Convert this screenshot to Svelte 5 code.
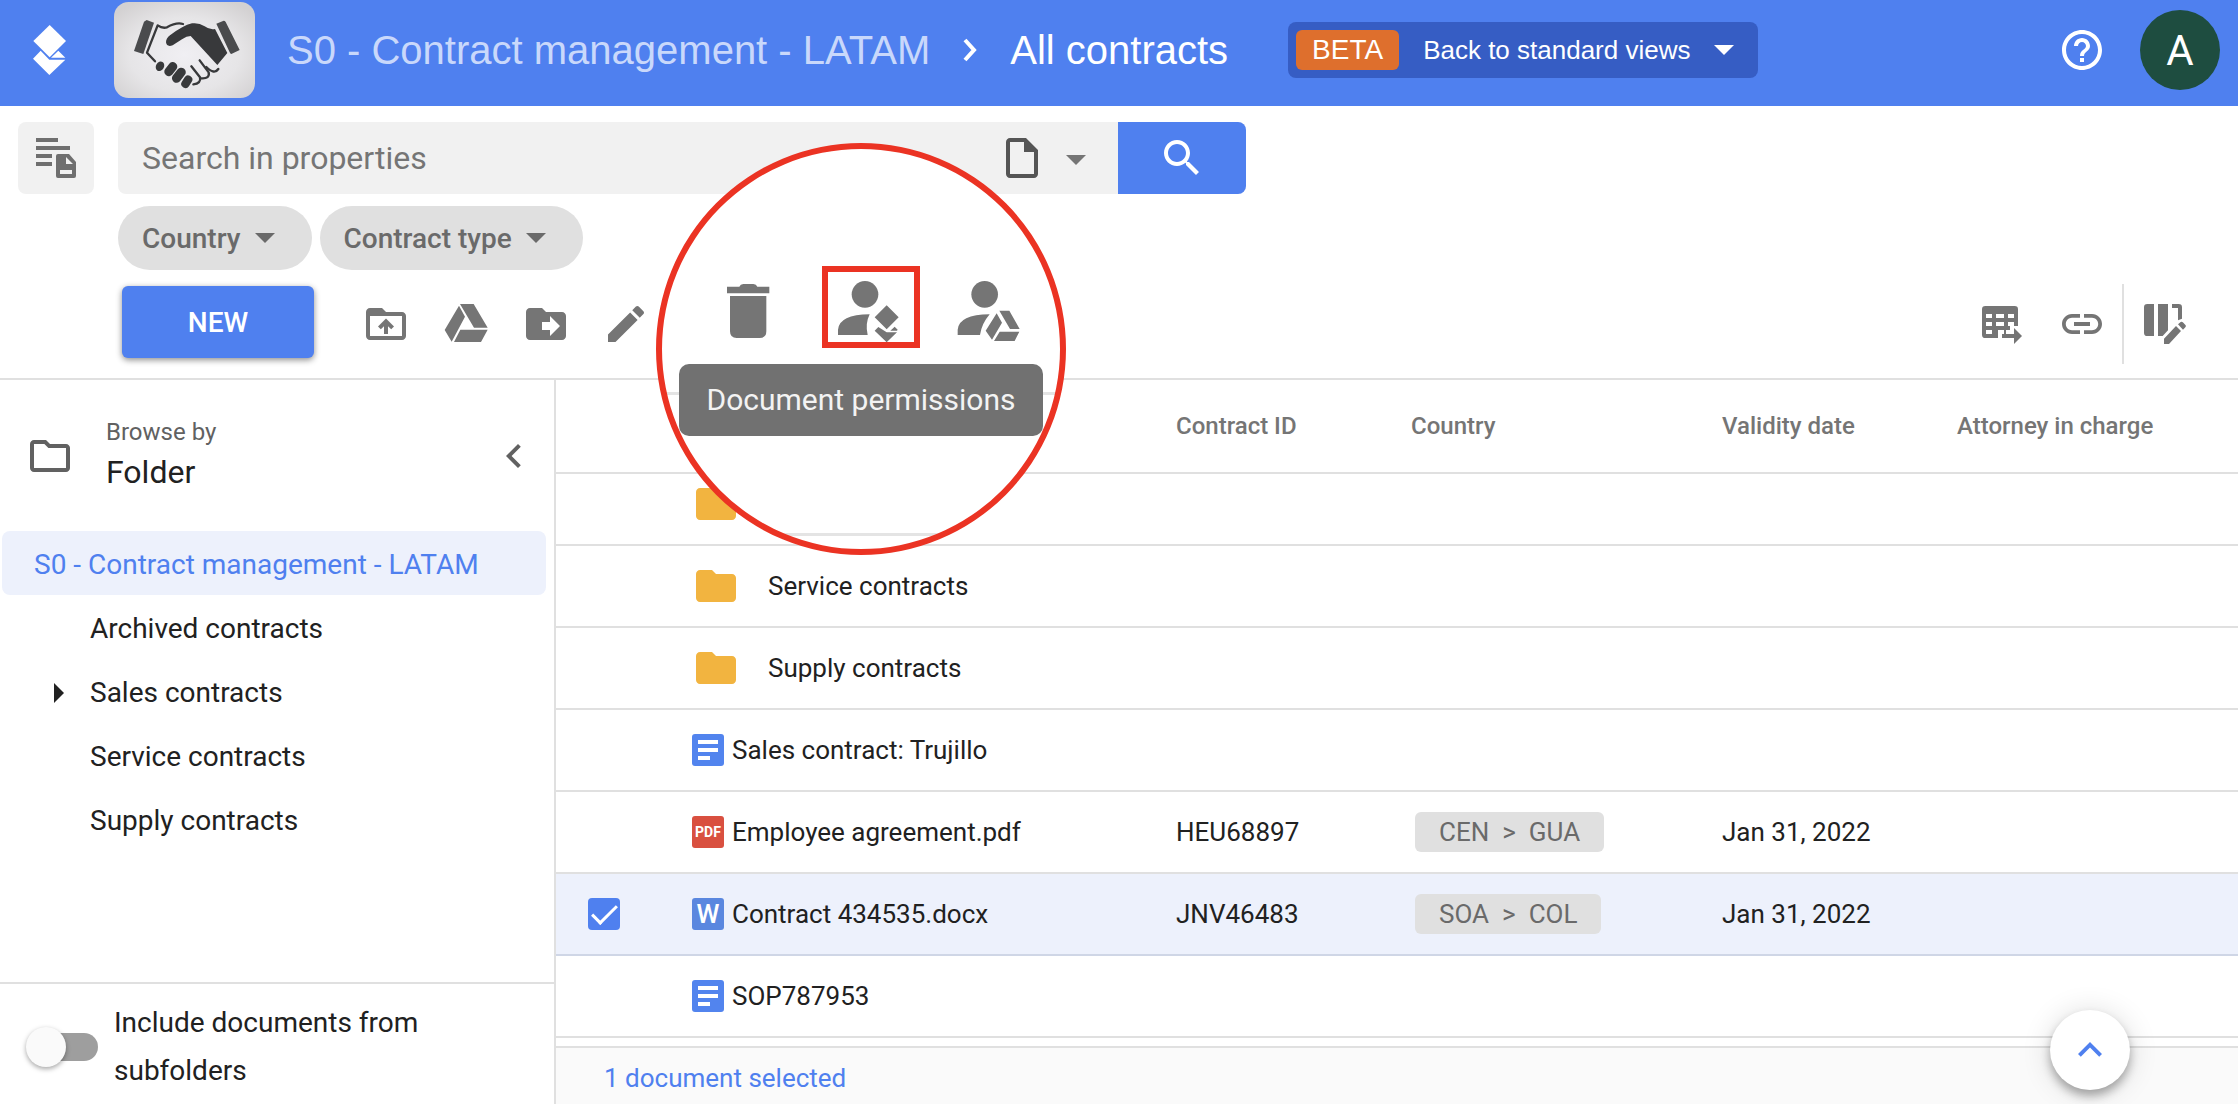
<script>
  const folderPath =
    'M10 4H4c-1.1 0-2 .9-2 2v12c0 1.1.9 2 2 2h16c1.1 0 2-.9 2-2V8c0-1.1-.9-2-2-2h-8l-2-2z';

  const folders = [
    { name: 'Archived contracts', expandable: false },
    { name: 'Sales contracts', expandable: true },
    { name: 'Service contracts', expandable: false },
    { name: 'Supply contracts', expandable: false }
  ];

  const filters = ['Country', 'Contract type'];

  let rows = $state([
    { kind: 'folder', name: '' },
    { kind: 'folder', name: 'Service contracts' },
    { kind: 'folder', name: 'Supply contracts' },
    { kind: 'doc', name: 'Sales contract: Trujillo' },
    { kind: 'pdf', name: 'Employee agreement.pdf', id: 'HEU68897', country: ['CEN', 'GUA'], date: 'Jan 31, 2022' },
    { kind: 'word', name: 'Contract 434535.docx', id: 'JNV46483', country: ['SOA', 'COL'], date: 'Jan 31, 2022', selected: true },
    { kind: 'doc', name: 'SOP787953' }
  ]);

  let includeSub = $state(false);
</script>

<div class="app">
  <header class="topbar">
    <svg class="logo" viewBox="99 75 99 150" aria-hidden="true">
      <path d="M149 75l49 48-49 49-49-49z" />
      <path d="M122 152l26 27h48l-48 46-49-49z" />
      <path d="M153 173l22-21 21 21z" />
    </svg>
    <svg class="brand" viewBox="342 6 423 288" role="img" aria-label="Handshake">
      <defs>
        <radialGradient id="paper" cx="50%" cy="55%" r="65%">
          <stop offset="0" stop-color="#f0eff3" />
          <stop offset="0.6" stop-color="#e6e5e7" />
          <stop offset="1" stop-color="#d3d1d2" />
        </radialGradient>
      </defs>
      <rect x="342" y="6" width="423" height="288" rx="44" fill="url(#paper)" />
      <g fill="#38393b">
        <path d="M440 60l22 8-32 94-28-9 30-88z" fill="#4a4b4d" />
        <path d="M649 71l22-9q4 0 6 4l42 84-25 12q-3 0-5-5z" fill="#4a4b4d" />
        <path d="M498 127q0-12 12-21 38-29 66-36 20-3 38 9 14 11 31 8l37 72-30 36-80-87q-12 0-26 10l-28 18q-18 6-20-9z" />
        <ellipse cx="480" cy="199" rx="12" ry="15" transform="rotate(30 480 199)" />
        <rect x="499" y="184" width="27" height="46" rx="13" transform="rotate(38 512 207)" />
        <rect x="523" y="201" width="27" height="50" rx="13" transform="rotate(38 537 226)" />
        <rect x="548" y="225" width="25" height="40" rx="12" transform="rotate(32 560 245)" />
      </g>
      <g fill="none" stroke="#38393b" stroke-width="7" stroke-linecap="round" stroke-linejoin="round">
        <path d="M465 184l-24-26 32-82q14 10 28 6 28-16 48-10" />
        <path d="M574 199l26 33q4 18-20 21" />
        <path d="M599 181l27 36q4 20-22 18" />
        <path d="M619 201q24 24 36 6" />
      </g>
    </svg>
    <nav class="crumbs" aria-label="Breadcrumb">
      <a class="parent" href="#root">S0 - Contract management - LATAM</a>
      <svg class="sep" viewBox="0 0 14 24" aria-hidden="true"><path d="M2 2l9 10-9 10" /></svg>
      <span>All contracts</span>
    </nav>
    <button class="beta" type="button">
      <span class="tag">BETA</span>
      <span>Back to standard views</span>
      <i class="caret"></i>
    </button>
    <button class="help" type="button" aria-label="Help">
      <svg class="ic" viewBox="0 0 24 24"><path d="M11 18h2v-2h-2v2zm1-16C6.48 2 2 6.48 2 12s4.48 10 10 10 10-4.48 10-10S17.52 2 12 2zm0 18c-4.41 0-8-3.59-8-8s3.59-8 8-8 8 3.59 8 8-3.59 8-8 8zm0-14c-2.21 0-4 1.79-4 4h2c0-1.1.9-2 2-2s2 .9 2 2c0 2-3 1.75-3 5h2c0-2.25 3-2.5 3-5 0-2.21-1.79-4-4-4z" /></svg>
    </button>
    <button class="avatar" type="button">A</button>
  </header>

  <section class="finder">
    <button class="mode" type="button" aria-label="Search mode">
      <svg class="ic" viewBox="32 134 48 48">
        <path d="M36 138h22v4H36zM36 146h34v4H36zM36 154h16v4H36zM36 162h16v4H36z" />
        <path fill-rule="evenodd" d="M58 154h11l7 8v14q0 2-2 2H58q-2 0-2-2v-20q0-2 2-2zm8 3v7h7zM60 170v4h12v-4z" />
      </svg>
    </button>
    <div class="stack">
      <form class="search" onsubmit={(e) => e.preventDefault()}>
        <input type="text" placeholder="Search in properties" aria-label="Search in properties" />
        <button class="scope" type="button" aria-label="Search scope">
          <svg class="ic" viewBox="0 0 24 24"><path d="M14 2H6c-1.1 0-2 .9-2 2v16c0 1.1.9 2 2 2h12c1.1 0 2-.9 2-2V8l-6-6zM6 20V4h7v5h5v11H6z" /></svg>
          <i class="caret"></i>
        </button>
        <button class="go" type="submit" aria-label="Search">
          <svg class="ic" viewBox="0 0 24 24"><path d="M15.5 14h-.79l-.28-.27C15.41 12.59 16 11.11 16 9.5 16 5.91 13.09 3 9.5 3S3 5.91 3 9.5 5.91 16 9.5 16c1.61 0 3.09-.59 4.23-1.57l.27.28v.79l5 4.99L20.49 19l-4.99-5zm-6 0C7.01 14 5 11.99 5 9.5S7.01 5 9.5 5 14 7.01 14 9.5 11.99 14 9.5 14z" /></svg>
        </button>
      </form>
      <div class="filters">
        {#each filters as f}
          <button type="button">{f}<i class="caret"></i></button>
        {/each}
      </div>
    </div>
  </section>

  <section class="toolbar">
    <button class="new" type="button">NEW</button>
    <button class="tool" type="button" aria-label="Upload">
      <svg class="ic" viewBox="0 0 24 24"><path fill-rule="evenodd" d="M10 4H4c-1.1 0-2 .9-2 2v12c0 1.1.9 2 2 2h16c1.1 0 2-.9 2-2V8c0-1.1-.9-2-2-2h-8l-2-2zM4 8h16v10H4z" /><path d="M12 9.2l-4 4 1.4 1.4 1.6-1.5V17h2v-3.9l1.6 1.5 1.4-1.4z" /></svg>
    </button>
    <button class="tool" type="button" aria-label="Open in Drive">
      <svg class="ic" viewBox="306 60 144 144"><path d="M360 72h41l42 71h-41zM357 77l18 33-40 75-21-35zM361 149h82l-20 37h-81z" /></svg>
    </button>
    <button class="tool" type="button" aria-label="Move">
      <svg class="ic" viewBox="0 0 24 24"><path fill-rule="evenodd" d="{folderPath}M14 18v-3h-4v-4h4V8l5 5z" /></svg>
    </button>
    <button class="tool" type="button" aria-label="Edit">
      <svg class="ic" viewBox="0 0 24 24"><path d="M3 17.25V21h3.75L17.81 9.94l-3.75-3.75L3 17.25zM20.71 7.04c.39-.39.39-1.02 0-1.41l-2.34-2.34c-.39-.39-1.02-.39-1.41 0l-1.83 1.83 3.75 3.75 1.83-1.83z" /></svg>
    </button>
    <span class="grow"></span>
    <button class="tool" type="button" aria-label="Export table">
      <svg class="ic" viewBox="54 90 144 144">
        <path fill-rule="evenodd" d="M76 108h88q10 0 10 10v50h-24v12h-36v24H76q-10 0-10-10v-76q0-10 10-10zM78 132v12h18v-12zM108 132v12h24v-12zM144 132v12h18v-12zM78 156v12h18v-12zM108 156v12h24v-12zM144 156v12h18v-12zM78 180v12h18v-12z" />
        <path d="M96 180h12v24H96zM108 192h6v12h-6zM126 192h36v-18l24 24-24 24v-18h-36zM132 180h6v12h-6z" />
      </svg>
    </button>
    <button class="tool" type="button" aria-label="Copy link">
      <svg class="ic" viewBox="0 0 24 24"><path d="M3.9 12c0-1.71 1.39-3.1 3.1-3.1h4V7H7c-2.76 0-5 2.24-5 5s2.24 5 5 5h4v-1.9H7c-1.71 0-3.1-1.39-3.1-3.1zM8 13h8v-2H8v2zm9-6h-4v1.9h4c1.71 0 3.1 1.39 3.1 3.1s-1.39 3.1-3.1 3.1h-4V17h4c2.76 0 5-2.24 5-5s-2.24-5-5-5z" /></svg>
    </button>
    <span class="rule"></span>
    <button class="tool" type="button" aria-label="Edit columns">
      <svg class="ic" viewBox="540 90 144 144"><path d="M562 102h20v96h-20q-10 0-10-10v-76q0-10 10-10zM594 102h30v79l-16 17h-14zM636 102h20q10 0 10 10v34l-12 5v-37h-18zM612 222v-16l36-38 15 15-36 39zM654 163l8-7q4-2 8 2l7 8q2 3-1 6l-7 7z" /></svg>
    </button>
  </section>

  <main>
    <aside>
      <div class="browse">
        <svg class="ic" viewBox="0 0 24 24" aria-hidden="true"><path fill-rule="evenodd" d="{folderPath}M9.2 6l2 2H20v10H4V6z" /></svg>
        <div class="label">
          <span class="small">Browse by</span>
          <span class="big">Folder</span>
        </div>
        <button class="fold" type="button" aria-label="Collapse panel">
          <svg class="ic" viewBox="0 0 24 24"><path d="M15.4 7.4L14 6l-6 6 6 6 1.4-1.4-4.6-4.6z" /></svg>
        </button>
      </div>
      <nav class="tree" aria-label="Folders">
        <a class="root" href="#root">S0 - Contract management - LATAM</a>
        {#each folders as f}
          <a href="#folder" class:open={f.expandable}>{f.name}</a>
        {/each}
      </nav>
      <label class="include">
        <input type="checkbox" role="switch" bind:checked={includeSub} />
        <span>Include documents from subfolders</span>
      </label>
    </aside>

    <section class="list">
      <table>
        <colgroup>
          <col class="c-pick" /><col class="c-name" /><col class="c-id" /><col class="c-country" /><col class="c-date" /><col />
        </colgroup>
        <thead>
          <tr>
            <th></th><th></th><th>Contract ID</th><th>Country</th><th>Validity date</th><th>Attorney in charge</th>
          </tr>
        </thead>
        <tbody>
          {#each rows as r, i}
            <tr class:selected={r.selected} class:cut={i === 0}>
              <td class="pick">
                {#if r.selected}<input type="checkbox" checked aria-label="Select {r.name}" />{/if}
              </td>
              <td>
                <div class="name" class:dir={r.kind === 'folder'}>
                  {#if r.kind === 'folder'}
                    <svg class="folder" viewBox="2 4 20 16" aria-hidden="true"><path d={folderPath} /></svg>
                  {:else if r.kind === 'doc'}
                    <span class="file doc"><svg viewBox="0 0 32 32" aria-hidden="true"><path d="M6 6h20v4H6zM6 14h20v4H6zM6 22h12v4H6z" /></svg></span>
                  {:else if r.kind === 'pdf'}
                    <span class="file pdf">PDF</span>
                  {:else}
                    <span class="file word">W</span>
                  {/if}
                  <span>{r.name}</span>
                </div>
              </td>
              <td>{r.id ?? ''}</td>
              <td>
                {#if r.country}
                  <span class="pill"><span>{r.country[0]}</span><span>&gt;</span><span>{r.country[1]}</span></span>
                {/if}
              </td>
              <td>{r.date ?? ''}</td>
              <td></td>
            </tr>
          {/each}
        </tbody>
      </table>
      <footer>1 document selected</footer>
      <button class="fab" type="button" aria-label="Back to top">
        <svg class="ic" viewBox="0 0 24 24"><path d="M12 8l-6 6 1.4 1.4 4.6-4.6 4.6 4.6L18 14z" /></svg>
      </button>
    </section>
  </main>

  <div class="zoomed">
    <div class="lens">
      <div class="tools">
        <button type="button" aria-label="Delete">
          <svg viewBox="234 435 192 192"><path d="M261 470h37q3-8 12-8h30q9 0 12 8h36v20H261zM270 498h109v106q0 20-20 20h-69q-20 0-20-20z" /></svg>
        </button>
        <button class="marked" type="button" aria-label="Document permissions">
          <svg viewBox="597 435 192 192">
            <circle cx="675" cy="493" r="40" />
            <path d="M594 615v-16q4-45 95-46-14 28-6 62zM740 526l36 36-36 36-36-36zM704 602l11-11 25 16h31l-31 30zM751 602l13-12 9 9-2 3z" />
          </svg>
        </button>
        <button type="button" aria-label="Drive permissions">
          <svg viewBox="960 435 192 192">
            <circle cx="1034" cy="493" r="40" />
            <path d="M953 615v-16q4-45 96-46-24 28-29 62zM1078 542h30l31 55h-29zM1070 550l16 28-30 51-19-27zM1079 605h59l-14 28h-62z" />
          </svg>
        </button>
      </div>
    </div>
    <div class="tip" role="tooltip">Document permissions</div>
  </div>
</div>

<style>
  :global(body) {
    margin: 0;
    background: #fff;
  }
  .app {
    position: relative;
    display: flex;
    flex-direction: column;
    min-height: 100vh;
    font-family: Roboto, 'Liberation Sans', sans-serif;
    font-size: 28px;
    color: #212121;
  }
  .app :global(*) {
    box-sizing: border-box;
  }
  button,
  input {
    font: inherit;
    color: inherit;
    border: 0;
    margin: 0;
    padding: 0;
    background: none;
  }
  a {
    color: inherit;
    text-decoration: none;
  }
  .ic {
    display: block;
    flex: none;
    width: 48px;
    height: 48px;
    fill: currentColor;
  }
  .caret {
    border: 10px solid transparent;
    border-top-color: currentColor;
    border-bottom: 0;
  }

  .topbar {
    display: flex;
    align-items: center;
    height: 106px;
    padding: 0 18px 6px 33px;
    background: #4f80ef;
    color: #fff;
    font-family: 'Liberation Sans', Arial, sans-serif;
  }
  .logo {
    width: 33px;
    height: 50px;
    fill: #fff;
  }
  .brand {
    width: 141px;
    height: 96px;
    margin: 0 32px 0 48px;
  }
  .crumbs {
    display: flex;
    align-items: center;
    gap: 33px;
    font-size: 40px;
    white-space: nowrap;
  }
  .parent {
    color: #c9d8fb;
  }
  .sep {
    width: 14px;
    height: 24px;
    fill: none;
    stroke: #fff;
    stroke-width: 4;
  }
  .beta {
    display: flex;
    align-items: center;
    height: 56px;
    margin-left: 60px;
    padding: 0 24px 0 8px;
    border-radius: 8px;
    background: #365dc4;
    font-size: 26px;
    gap: 24px;
    white-space: nowrap;
  }
  .tag {
    padding: 0 16px;
    border-radius: 6px;
    background: #de6f2d;
    font-size: 28px;
    line-height: 40px;
  }
  .help {
    margin: 0 34px 0 auto;
  }
  .avatar {
    width: 80px;
    height: 80px;
    border-radius: 50%;
    background: #1e4d40;
    font-family: Roboto, sans-serif;
    font-size: 42px;
  }

  .finder {
    display: flex;
    align-items: flex-start;
    gap: 24px;
    padding: 16px 18px 0;
  }
  .mode {
    display: flex;
    justify-content: center;
    align-items: center;
    width: 76px;
    height: 72px;
    border-radius: 8px;
    background: #f1f1f1;
    color: #6f6f6f;
  }
  .stack {
    flex: 1;
    max-width: 1128px;
  }
  .search {
    display: flex;
    height: 72px;
    border-radius: 8px;
    background: #f1f1f1;
    overflow: hidden;
  }
  .search input {
    flex: 1;
    min-width: 0;
    padding-left: 24px;
    font-size: 32px;
  }
  .search input::placeholder {
    color: #757575;
    opacity: 1;
  }
  .scope {
    display: flex;
    align-items: center;
    gap: 20px;
    padding-right: 32px;
    color: #555;
  }
  .scope .caret {
    margin-top: 4px;
    color: #757575;
  }
  .go {
    display: flex;
    justify-content: center;
    align-items: center;
    width: 128px;
    background: #4f80ef;
    color: #fff;
  }
  .filters {
    display: flex;
    gap: 8px;
    margin-top: 12px;
  }
  .filters button {
    display: flex;
    align-items: center;
    gap: 14px;
    height: 64px;
    padding: 0 37px 0 24px;
    border-radius: 32px;
    background: #e0e0e0;
    color: #6a6a6a;
    font-weight: 500;
  }

  .toolbar {
    display: flex;
    align-items: center;
    height: 110px;
    padding: 0 34px 0 122px;
    border-bottom: 2px solid #e0e0e0;
    color: #757575;
  }
  .new {
    width: 192px;
    height: 72px;
    margin: 0 32px 4px 0;
    border-radius: 6px;
    background: #4f80ef;
    color: #fff;
    font-weight: 500;
    box-shadow: 0 2px 6px rgba(0, 0, 0, 0.45);
  }
  .tool {
    display: flex;
    justify-content: center;
    align-items: center;
    width: 80px;
    height: 80px;
  }
  .grow {
    flex: 1;
  }
  .rule {
    width: 2px;
    height: 80px;
    background: #e0e0e0;
  }

  main {
    flex: 1;
    display: flex;
  }
  aside {
    display: flex;
    flex-direction: column;
    flex: none;
    width: 556px;
    border-right: 2px solid #e0e0e0;
  }
  .browse {
    display: flex;
    align-items: center;
    height: 151px;
    padding: 0 16px 0 26px;
    color: #616161;
  }
  .label {
    display: flex;
    flex-direction: column;
    flex: 1;
    margin-left: 32px;
    padding-bottom: 8px;
    line-height: 40px;
  }
  .small {
    font-size: 24px;
  }
  .big {
    font-size: 32px;
    color: #212121;
  }
  .tree {
    display: flex;
    flex-direction: column;
    padding: 0 8px 0 2px;
    line-height: 60px;
  }
  .tree a {
    display: flex;
    align-items: center;
    padding: 4px 0 0 88px;
  }
  .tree .root {
    padding-left: 32px;
    border-radius: 8px;
    background: #edf1fc;
    color: #4f80ef;
  }
  .tree .open {
    padding-left: 52px;
    gap: 26px;
  }
  .tree .open::before {
    content: '';
    border: 10px solid transparent;
    border-left-color: currentColor;
    border-right: 0;
  }
  .include {
    display: flex;
    align-items: center;
    gap: 16px;
    height: 122px;
    margin-top: auto;
    padding: 12px 100px 6px 26px;
    border-top: 2px solid #e0e0e0;
    line-height: 48px;
  }
  .include input {
    appearance: none;
    display: flex;
    align-items: center;
    flex: none;
    width: 72px;
    height: 28px;
    border-radius: 14px;
    background: linear-gradient(#9e9e9e, #9e9e9e) right / 58px 100% no-repeat;
  }
  .include input::before {
    content: '';
    width: 40px;
    height: 40px;
    border-radius: 50%;
    background: #fafafa;
    box-shadow: 0 2px 5px rgba(0, 0, 0, 0.35);
  }
  .include input:checked {
    justify-content: flex-end;
  }

  .list {
    position: relative;
    flex: 1;
    display: flex;
    flex-direction: column;
    min-width: 0;
  }
  table {
    width: 100%;
    table-layout: fixed;
    border-collapse: separate;
    border-spacing: 0;
  }
  .c-pick {
    width: 136px;
  }
  .c-name {
    width: 484px;
  }
  .c-id {
    width: 235px;
  }
  .c-country {
    width: 311px;
  }
  .c-date {
    width: 235px;
  }
  th {
    height: 94px;
    padding: 0;
    border-bottom: 2px solid #e0e0e0;
    text-align: left;
    font-size: 24px;
    font-weight: 500;
    color: #757575;
    white-space: nowrap;
  }
  td {
    height: 82px;
    padding: 0;
    border-bottom: 2px solid #e0e0e0;
    white-space: nowrap;
    font-size: 26px;
  }
  .cut td {
    height: 72px;
    padding-bottom: 10px;
  }
  .selected td {
    background: #edf1fc;
    border-color: #cfd6e6;
  }
  .pick {
    padding-left: 32px;
  }
  .pick input {
    appearance: none;
    display: block;
    width: 32px;
    height: 32px;
    border-radius: 4px;
    background: #4f80ef;
  }
  .pick input:checked::before {
    content: '';
    display: block;
    width: 22px;
    height: 10px;
    margin: 0 auto;
    transform: translateY(7px) rotate(-45deg);
    border: solid #fff;
    border-width: 0 0 3px 3px;
  }
  .name {
    display: flex;
    align-items: center;
    gap: 8px;
  }
  .dir {
    gap: 32px;
    padding-left: 4px;
  }
  .folder {
    width: 40px;
    height: 32px;
    fill: #f2b440;
  }
  .file {
    display: flex;
    justify-content: center;
    align-items: center;
    width: 32px;
    height: 32px;
    border-radius: 3px;
    color: #fff;
    font-weight: 700;
  }
  .doc {
    background: #5284ee;
  }
  .doc svg {
    width: 32px;
    height: 32px;
    fill: #fff;
  }
  .pdf {
    background: #d95040;
    font-size: 14px;
  }
  .word {
    background: #5a87df;
    font-size: 26px;
    font-weight: 500;
  }
  .pill {
    display: inline-flex;
    align-items: center;
    gap: 13px;
    height: 40px;
    margin-left: 4px;
    padding: 0 24px;
    border-radius: 6px;
    background: #e0e0e0;
    color: #6a6a6a;
  }
  footer {
    flex: 1;
    min-height: 56px;
    margin-top: 8px;
    padding: 4px 48px 0;
    border-top: 2px solid #e0e0e0;
    background: #fafafa;
    color: #4f80ef;
    font-size: 26px;
    line-height: 52px;
  }
  .fab {
    position: absolute;
    right: 108px;
    bottom: 14px;
    display: flex;
    justify-content: center;
    align-items: center;
    width: 80px;
    height: 80px;
    border-radius: 50%;
    background: #fff;
    color: #4f80ef;
    box-shadow: 0 6px 10px rgba(0, 0, 0, 0.3), 0 2px 30px rgba(0, 0, 0, 0.14);
  }

  /* Magnified part of the toolbar, laid over the page */
  .zoomed {
    position: absolute;
    left: 656px;
    top: 143px;
    display: flex;
    justify-content: center;
    width: 410px;
    height: 412px;
  }
  .lens {
    flex: 1;
    border: 6px solid #eb3323;
    border-radius: 50%;
    overflow: hidden;
    background:
      linear-gradient(#e4e4e4, #e4e4e4) 0 243px / 100% 3px no-repeat,
      linear-gradient(#e4e4e4, #e4e4e4) 0 384px / 100% 3px no-repeat,
      #fff;
  }
  .tools {
    display: flex;
    align-items: center;
    gap: 40px;
    padding: 117px 0 0 56px;
  }
  .tools button {
    display: flex;
    justify-content: center;
    align-items: center;
  }
  .tools .marked {
    width: 98px;
    height: 82px;
    border: 6px solid #eb3323;
  }
  .tools svg {
    flex: none;
    width: 64px;
    height: 64px;
    overflow: visible;
    fill: #757575;
  }
  .tip {
    position: absolute;
    top: 221px;
    padding: 0 27px;
    border-radius: 10px;
    background: #717171;
    color: #f3f3f3;
    font-size: 30px;
    line-height: 72px;
    white-space: nowrap;
  }
</style>
